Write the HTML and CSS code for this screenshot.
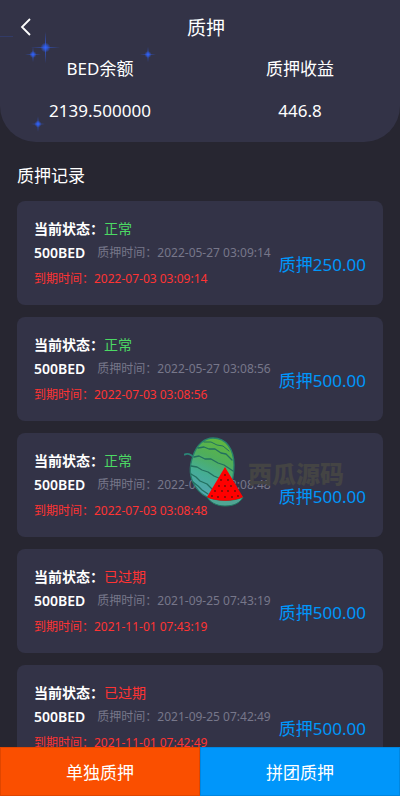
FILE: index.html
```
<!DOCTYPE html>
<html lang="zh-CN">
<head>
    <meta charset="UTF-8">
    <meta content="width=device-width, initial-scale=1.0" name="viewport">
    <title>质押</title>
    <link rel="stylesheet" href="styles.css">
</head>
<body>
<header class="top">
    <svg class="stars" width="160" height="142" viewBox="0 0 160 142" aria-hidden="true">
        <defs>
            <radialGradient id="glow">
                <stop offset="0" stop-color="#2f63ff"/>
                <stop offset="0.4" stop-color="#2f5ce8" stop-opacity="0.8"/>
                <stop offset="1" stop-color="#2f5ce8" stop-opacity="0"/>
            </radialGradient>
            <g id="star">
                <ellipse rx="15" ry="1" fill="url(#glow)" opacity="0.5"/>
                <ellipse rx="1" ry="16" fill="url(#glow)" opacity="0.7"/>
                <circle r="5" fill="url(#glow)"/>
            </g>
            <g id="smallStar">
                <ellipse rx="8" ry="1" fill="url(#glow)" opacity="0.5"/>
                <ellipse rx="1" ry="9" fill="url(#glow)" opacity="0.6"/>
                <circle r="3.5" fill="url(#glow)"/>
            </g>
        </defs>
        <use href="#star" transform="translate(45.5 47.5)"/>
        <use href="#smallStar" transform="translate(33 54.5)"/>
        <use href="#smallStar" transform="translate(148 54.5)"/>
        <use href="#smallStar" transform="translate(38 124)"/>
        <path d="M0 36.5h13" stroke="#2f5ce8" opacity="0.2"/>
    </svg>
    <nav class="nav">
        <button class="back" type="button" aria-label="返回">
            <svg width="12" height="18" viewBox="0 0 12 18"><path d="M10 1L2 9l8 8" fill="none" stroke="#fff" stroke-width="1.8"/></svg>
        </button>
        <h1 class="title">质押</h1>
    </nav>
    <div class="totals">
        <div class="total">
            <span>BED余额</span>
            <span>2139.500000</span>
        </div>
        <div class="total">
            <span>质押收益</span>
            <span>446.8</span>
        </div>
    </div>
</header>

<main class="records">
    <h2 class="heading">质押记录</h2>
    <article class="card">
        <p class="state">当前状态：<span class="normal">正常</span></p>
        <div class="detail">
            <div>
                <p class="pledge"><b>500BED</b><span class="time">质押时间：2022-05-27 03:09:14</span></p>
                <p class="expire">到期时间：2022-07-03 03:09:14</p>
            </div>
            <span class="amount">质押250.00</span>
        </div>
    </article>
    <article class="card">
        <p class="state">当前状态：<span class="normal">正常</span></p>
        <div class="detail">
            <div>
                <p class="pledge"><b>500BED</b><span class="time">质押时间：2022-05-27 03:08:56</span></p>
                <p class="expire">到期时间：2022-07-03 03:08:56</p>
            </div>
            <span class="amount">质押500.00</span>
        </div>
    </article>
    <article class="card">
        <p class="state">当前状态：<span class="normal">正常</span></p>
        <div class="detail">
            <div>
                <p class="pledge"><b>500BED</b><span class="time">质押时间：2022-05-27 03:08:48</span></p>
                <p class="expire">到期时间：2022-07-03 03:08:48</p>
            </div>
            <span class="amount">质押500.00</span>
        </div>
    </article>
    <article class="card">
        <p class="state">当前状态：<span class="expired">已过期</span></p>
        <div class="detail">
            <div>
                <p class="pledge"><b>500BED</b><span class="time">质押时间：2021-09-25 07:43:19</span></p>
                <p class="expire">到期时间：2021-11-01 07:43:19</p>
            </div>
            <span class="amount">质押500.00</span>
        </div>
    </article>
    <article class="card">
        <p class="state">当前状态：<span class="expired">已过期</span></p>
        <div class="detail">
            <div>
                <p class="pledge"><b>500BED</b><span class="time">质押时间：2021-09-25 07:42:49</span></p>
                <p class="expire">到期时间：2021-11-01 07:42:49</p>
            </div>
            <span class="amount">质押500.00</span>
        </div>
    </article>
</main>

<footer class="actions">
    <button class="action single" type="button">单独质押</button>
    <button class="action group" type="button">拼团质押</button>
</footer>

<div class="watermark">
    <svg width="60" height="70" viewBox="0 0 60 70" aria-hidden="true">
        <defs>
            <linearGradient id="rind" x1="0.7" y1="0" x2="0.4" y2="1">
                <stop offset="0" stop-color="#62b83c"/>
                <stop offset="0.35" stop-color="#4fae5c"/>
                <stop offset="0.65" stop-color="#45ad95"/>
                <stop offset="1" stop-color="#55a5b5"/>
            </linearGradient>
        </defs>
        <path d="M0 18c3-2 7-1 10 3" fill="none" stroke="#2b8577" stroke-width="2"/>
        <path d="M9 19C13 7 21 1 29 1c13 0 21 11 21 27 0 20-7 34-20 34C16 60 0 43 9 19z" fill="url(#rind)" stroke="#28806d" stroke-width="1.3"/>
        <g fill="none" stroke="#22705f" stroke-width="1.3" stroke-linecap="round" stroke-linejoin="round">
            <path d="M14 11l6-1 5 2 6 0 6 4 5 1 6 6"/>
            <path d="M10 20l5-1 6 3 6 0 7 4 6 2 9 6"/>
            <path d="M7 29l6 1 5 3 6 2 6 4 7 3"/>
            <path d="M7 37l5 3 4 4 7 3 5 5"/>
            <path d="M9 45l5 4 4 4 6 4"/>
            <path d="M20 5l7 0 6 3 6 1 6 5" stroke-width="1"/>
        </g>
        <path d="M23 60c8 4 26 5 36 0-3 6-9 9-18 9s-15-4-18-9z" fill="#50a594" stroke="#207660"/>
        <path d="M41 30L59 60c-9 5-27 5-36 0z" fill="#ff0000"/>
        <g fill="#641108">
            <circle cx="41" cy="38" r=".9"/>
            <circle cx="37" cy="43" r=".9"/><circle cx="44" cy="43" r=".9"/>
            <circle cx="35" cy="49" r=".9"/><circle cx="41" cy="49" r=".9"/><circle cx="47" cy="49" r=".9"/>
            <circle cx="31" cy="54" r=".9"/><circle cx="38" cy="54" r=".9"/><circle cx="44" cy="54" r=".9"/><circle cx="51" cy="54" r=".9"/>
            <circle cx="28" cy="59" r=".9"/><circle cx="34" cy="60" r=".9"/><circle cx="41" cy="60" r=".9"/><circle cx="48" cy="60" r=".9"/><circle cx="54" cy="59" r=".9"/>
        </g>
    </svg>
    <span>西瓜源码</span>
</div>
</body>
</html>
```
FILE: styles.css
```
html {
    background-color: #fff;
}

body {
    position: relative;
    display: flex;
    flex-direction: column;
    height: 100vh;
    margin: 0 1px 0 0;
    background-color: #272631;
    color: #fff;
    font-family: "Noto Sans", "Noto Sans CJK SC", sans-serif;
    font-size: 17px;
}

h1, h2, p {
    margin: 0;
    font-weight: normal;
}

button {
    padding: 0;
    border: none;
    color: inherit;
    font: inherit;
    cursor: pointer;
}

/* Header */
.top {
    position: relative;
    flex: none;
    padding-bottom: 10px;
    border-radius: 0 0 36px 36px;
    background-color: #333347;
}

.stars {
    position: absolute;
    top: 0;
    left: 0;
}

.nav {
    position: relative;
    display: flex;
    align-items: center;
    height: 54px;
    padding: 0 20px;
}

.back {
    display: flex;
    width: 12px;
    background: none;
}

.title {
    flex: 1;
    font-size: 19px;
    text-align: center;
}

.totals {
    position: relative;
    display: flex;
}

.total {
    display: flex;
    flex: 1;
    flex-direction: column;
    gap: 12px;
    padding-bottom: 6px;
    line-height: 30px;
    text-align: center;
}

/* Record list */
.records {
    display: flex;
    flex: 1;
    flex-direction: column;
    gap: 12px;
    min-height: 0;
    padding: 0 17px;
    overflow-y: auto;
    scrollbar-width: none;
}

.heading {
    padding-top: 20px;
    font-size: 17px;
    line-height: 27px;
}

.card {
    flex: none;
    padding: 16px 17px 12px;
    border-radius: 8px;
    background-color: #333347;
}

.state {
    font-size: 14px;
    font-weight: 600;
    line-height: 24px;
}

.state span {
    font-weight: normal;
}

.normal {
    color: #4cd964;
}

.expired {
    color: #ff3333;
}

.detail {
    display: flex;
    align-items: flex-start;
    justify-content: space-between;
    white-space: nowrap;
}

.pledge {
    display: flex;
    gap: 12px;
    font-size: 14px;
    line-height: 24px;
}

.pledge b {
    font-weight: 600;
}

.time {
    color: #77778a;
    font-size: 12px;
}

.expire {
    color: #ff3333;
    font-size: 12px;
    line-height: 28px;
}

.amount {
    color: #0096fa;
    line-height: 48px;
}

/* Bottom buttons */
.actions {
    display: flex;
    flex: none;
}

.action {
    flex: 1;
    height: 49px;
    box-shadow: inset 0 0 0 1px rgba(0, 0, 0, 0.1);
}

.single {
    background-color: #fa4f00;
}

.group {
    background-color: #0096fa;
}

.watermark {
    position: absolute;
    top: 437px;
    left: 184px;
    display: flex;
    align-items: center;
    gap: 4px;
    color: #444;
    font-size: 24px;
    font-weight: 900;
    pointer-events: none;
}
```
